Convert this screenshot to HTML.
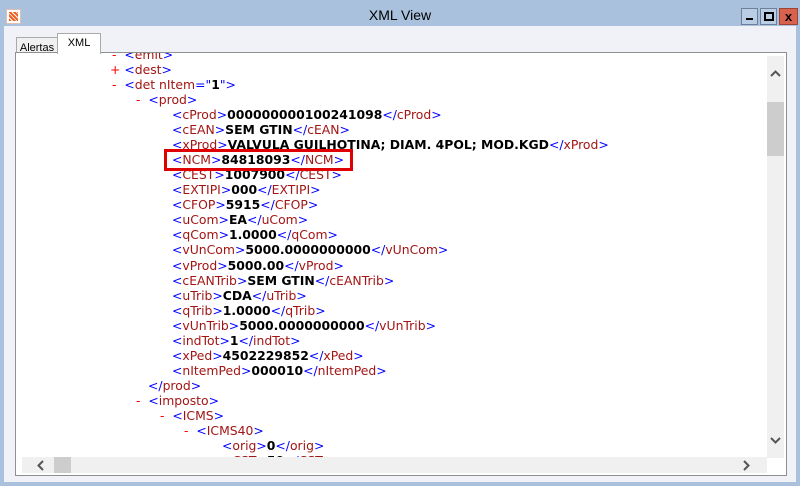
<!DOCTYPE html>
<html><head><style>
body{margin:0;width:800px;height:486px;background:#a9c1dd;position:relative;overflow:hidden;font-family:"DejaVu Sans",Verdana,sans-serif}
.title{position:absolute;left:0;top:0;width:800px;height:26px;text-align:center;font:14px "Liberation Sans",sans-serif;line-height:30px;color:#000}
.icon{position:absolute;left:6px;top:9px;width:13px;height:13px;background:#fff;border:1px solid #e0c0b0}
.icon:after{content:"";position:absolute;left:2px;top:2px;width:9px;height:9px;background:repeating-linear-gradient(45deg,#f06020 0 2px,#fff 2px 3px)}
.btn{position:absolute;top:8px;width:15px;height:15px;border:1px solid #6d7f99;background:#b9cde4}
.win{position:absolute;left:4px;top:26px;width:792px;height:456px;background:#f0f2f7}
.tab{position:absolute;top:35px;height:18px;font:11px "Liberation Sans",sans-serif;line-height:20px;text-align:center}
.panel{position:absolute;left:15px;top:52px;width:770px;height:422px;border:1px solid #8e8f8f;background:#fff;overflow:hidden}
.code{position:absolute;left:0;top:-6px;font-size:12.4px;line-height:15.05px;white-space:pre}
.l{position:absolute;white-space:pre}
.t{color:#0000ff}.n{color:#a31515}.v{color:#000;font-weight:bold}.m{color:#ff0000}
.vs{position:absolute;left:751px;top:3px;width:17px;height:402px;background:#f0f0f0}
.hs{position:absolute;left:6px;top:404px;width:745px;height:16px;background:#f0f0f0}
</style></head><body>
<div class="title">XML View</div>
<div class="icon"></div>
<div class="btn" style="left:741px"><div style="position:absolute;left:4px;top:9px;width:7px;height:2px;background:#000"></div></div>
<div class="btn" style="left:760px"><div style="position:absolute;left:3px;top:3px;width:6px;height:5px;border:2px solid #000"></div></div>
<div class="btn" style="left:779px;width:17px;background:#d9624d;border-color:#9c4536;color:#000;font:bold 13px 'Liberation Sans';text-align:center;line-height:15px">x</div>
<div class="win"></div>
<div class="tab" style="left:16px;width:40px;border:1px solid #aaa;border-bottom:none;background:#f0f0f0;top:37px;height:16px">Alertas</div>
<div class="tab" style="left:57px;width:42px;border:1px solid #aaa;border-bottom:none;background:#fff;top:33px;height:20px;line-height:18px;z-index:2">XML</div>
<div class="panel">
<div class="code">
<div class="l" style="left:96px;top:0"><span class="m">-</span>  <span class="t">&lt;</span><span class="n">emit</span><span class="t">&gt;</span></div>
<div class="l" style="left:94px;top:15px"><span class="m">+</span> <span class="t">&lt;</span><span class="n">dest</span><span class="t">&gt;</span></div>
<div class="l" style="left:96px;top:30px"><span class="m">-</span>  <span class="t">&lt;</span><span class="n">det nItem</span><span class="t">="</span><span class="v">1</span><span class="t">"&gt;</span></div>
<div class="l" style="left:120px;top:45px"><span class="m">-</span>  <span class="t">&lt;</span><span class="n">prod</span><span class="t">&gt;</span></div>
<div id="kids"></div>
</div>
<div style="position:absolute;left:148px;top:96px;width:183px;height:16px;border:3px solid #e00000;z-index:3"></div>
<div class="vs"><div style="position:absolute;left:0;top:46px;width:17px;height:54px;background:#cdcdcd"></div>
<svg style="position:absolute;left:3px;top:14px" width="11" height="8"><path d="M1 6L5.5 1.5L10 6" stroke="#555" stroke-width="2" fill="none"/></svg>
<svg style="position:absolute;left:3px;top:380px" width="11" height="8"><path d="M1 2L5.5 6.5L10 2" stroke="#555" stroke-width="2" fill="none"/></svg></div>
<div class="hs"><div style="position:absolute;left:32px;top:0;width:17px;height:16px;background:#cdcdcd"></div>
<svg style="position:absolute;left:15px;top:3px" width="8" height="11"><path d="M6 1L1.5 5.5L6 10" stroke="#555" stroke-width="2" fill="none"/></svg>
<svg style="position:absolute;left:720px;top:3px" width="8" height="11"><path d="M2 1L6.5 5.5L2 10" stroke="#555" stroke-width="2" fill="none"/></svg></div>
</div>
<script>
var rows=[["cProd","000000000100241098"],["cEAN","SEM GTIN"],["xProd","VALVULA GUILHOTINA; DIAM. 4POL; MOD.KGD"],["NCM","84818093"],["CEST","1007900"],["EXTIPI","000"],["CFOP","5915"],["uCom","EA"],["qCom","1.0000"],["vUnCom","5000.0000000000"],["vProd","5000.00"],["cEANTrib","SEM GTIN"],["uTrib","CDA"],["qTrib","1.0000"],["vUnTrib","5000.0000000000"],["indTot","1"],["xPed","4502229852"],["nItemPed","000010"]];
var h="",y=60;
function T(n){return '<span class="t">&lt;</span><span class="n">'+n+'</span><span class="t">&gt;</span>'}
function C(n){return '<span class="t">&lt;/</span><span class="n">'+n+'</span><span class="t">&gt;</span>'}
rows.forEach(function(r){h+='<div class="l" style="left:156px;top:'+y+'px">'+T(r[0])+'<span class="v">'+r[1]+'</span>'+C(r[0])+'</div>';y+=15.05});
h+='<div class="l" style="left:132px;top:'+y+'px">'+C("prod")+'</div>';y+=15.05;
h+='<div class="l" style="left:120px;top:'+y+'px"><span class="m">-</span>  '+T("imposto")+'</div>';y+=15.05;
h+='<div class="l" style="left:144px;top:'+y+'px"><span class="m">-</span>  '+T("ICMS")+'</div>';y+=15.05;
h+='<div class="l" style="left:168px;top:'+y+'px"><span class="m">-</span>  '+T("ICMS40")+'</div>';y+=15.05;
h+='<div class="l" style="left:206px;top:'+y+'px">'+T("orig")+'<span class="v">0</span>'+C("orig")+'</div>';y+=15.05;
h+='<div class="l" style="left:206px;top:'+y+'px">'+T("CST")+'<span class="v">50</span>'+C("CST")+'</div>';
document.getElementById("kids").outerHTML=h;
</script>
</body></html>
